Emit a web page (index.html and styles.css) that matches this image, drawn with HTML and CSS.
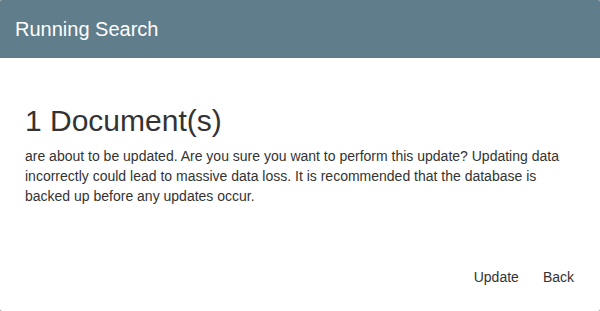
FILE: index.html
```html
<!DOCTYPE html>
<html lang="en">
<head>
    <meta charset="UTF-8">
    <meta name="viewport" content="width=device-width, initial-scale=1.0">
    <title>Running Search</title>
    <link rel="stylesheet" href="styles.css">
</head>
<body>
    <div class="dialog">
        <div class="dialog-header">
            <h2>Running Search</h2>
        </div>

        <div class="dialog-body">
            <h1>1 Document(s)</h1>
            <p>are about to be updated. Are you sure you want to perform this update? Updating data incorrectly could lead to massive data loss. It is recommended that the database is backed up before any updates occur.</p>
        </div>

        <div class="dialog-actions">
            <button class="btn">Update</button>
            <button class="btn">Back</button>
        </div>
    </div>
</body>
</html>
```

FILE: styles.css
```css
html, body {
    margin: 0;
    padding: 0;
    height: 100%;
    background: #8a8a8a;
}
body {
    font-family: "Liberation Sans", Arial, sans-serif;
    color: #333;
}
.dialog {
    height: 100%;
    background: white;
    border-radius: 2px;
    display: flex;
    flex-direction: column;
    overflow: hidden;
}
.dialog-header {
    height: 58px;
    background: #607d8b;
    display: flex;
    align-items: center;
    padding: 0 15px;
    flex-shrink: 0;
}
.dialog-header h2 {
    margin: 0;
    font-size: 20px;
    font-weight: normal;
    color: white;
}
.dialog-body {
    padding: 46px 25px 0 25px;
    flex: 1;
}
.dialog-body h1 {
    margin: 0 0 9px 0;
    font-size: 30px;
    font-weight: normal;
    line-height: 33px;
}
.dialog-body p {
    margin: 0;
    font-size: 14px;
    line-height: 20px;
}
.dialog-actions {
    display: flex;
    justify-content: flex-end;
    padding: 0 14px 18px 0;
}
.btn {
    background: none;
    border: none;
    font-family: inherit;
    font-size: 14px;
    color: #333;
    padding: 6px 12px;
    line-height: 20px;
    cursor: pointer;
}
```
